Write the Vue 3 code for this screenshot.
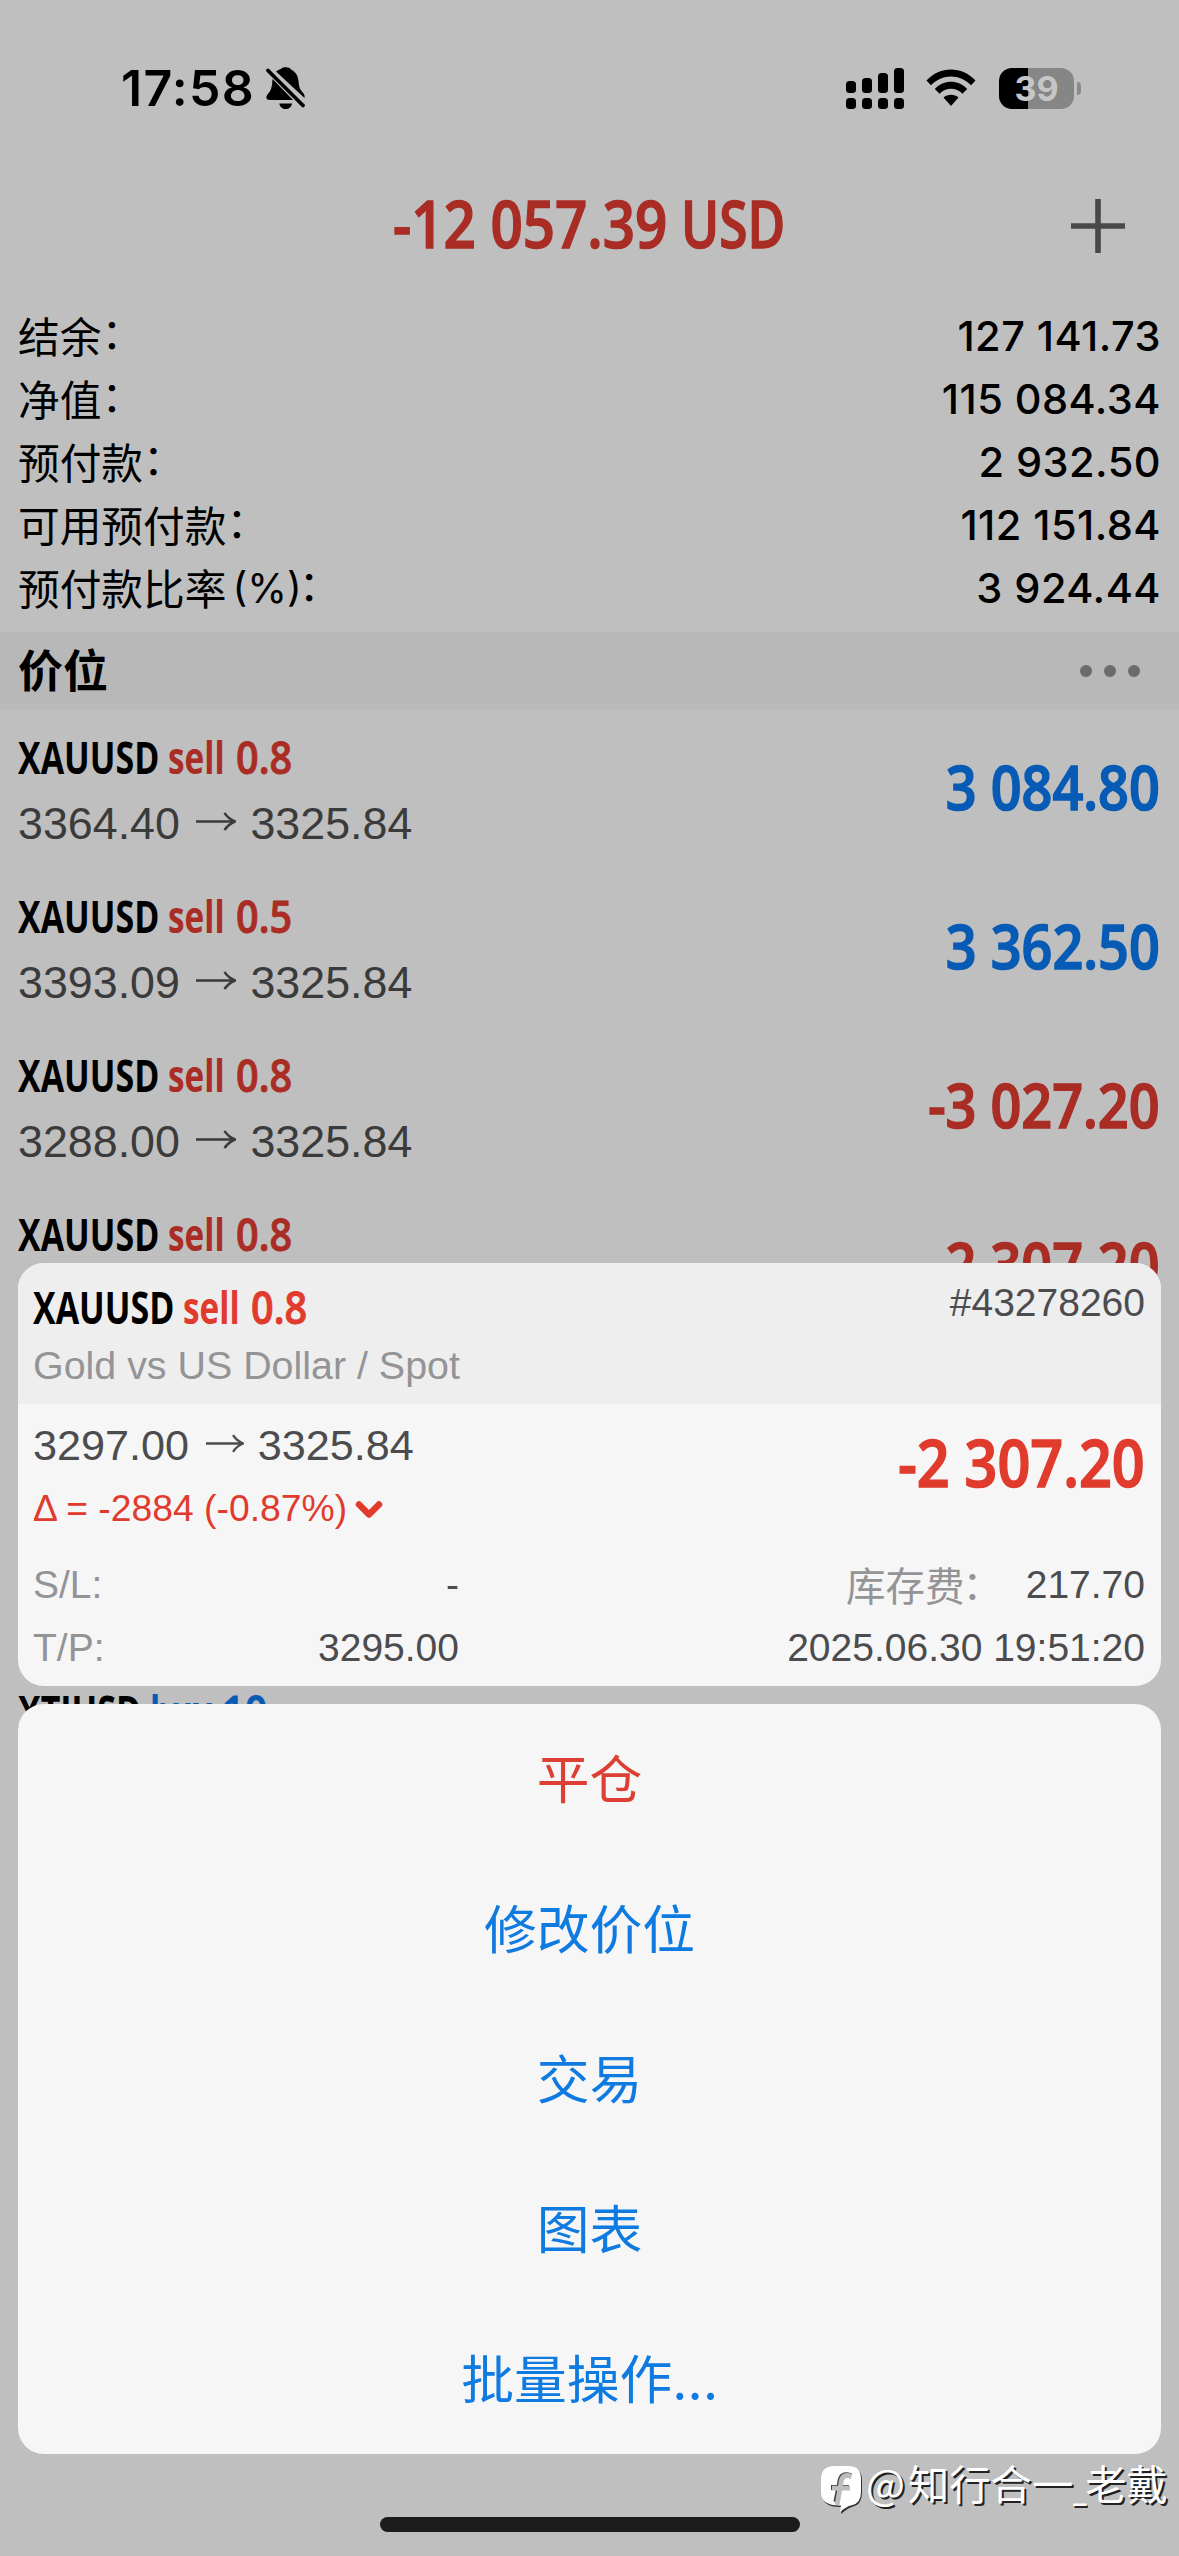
<script setup>
const summary = [
  { label: '结余', value: '127 141.73' },
  { label: '净值', value: '115 084.34' },
  { label: '预付款', value: '2 932.50' },
  { label: '可用预付款', value: '112 151.84' },
  { label: '预付款比率', unit: '(%)', value: '3 924.44' }
]

const positions = [
  { symbol: 'XAUUSD', side: 'sell', lots: '0.8', open: '3364.40', now: '3325.84', profit: '3 084.80' },
  { symbol: 'XAUUSD', side: 'sell', lots: '0.5', open: '3393.09', now: '3325.84', profit: '3 362.50' },
  { symbol: 'XAUUSD', side: 'sell', lots: '0.8', open: '3288.00', now: '3325.84', profit: '-3 027.20' },
  { symbol: 'XAUUSD', side: 'sell', lots: '0.8', profit: '-2 307.20' },
  { symbol: 'XTIUSD', side: 'buy', lots: '10', last: true }
]

const actions = [
  { text: '平仓', danger: true },
  { text: '修改价位' },
  { text: '交易' },
  { text: '图表' },
  { text: '批量操作', more: '...' }
]
</script>

<template>
  <main class="screen">
    <div class="status">
      <span class="clock">17:58</span>
      <svg class="bell" width="42" height="44" viewBox="0 0 42 44">
        <path d="M11 5.500 C13.500 3.800 15 3.500 16 3 C17 0.500 25 0.500 26 3.500 C31 6 33 10 33.500 15 C34 22 35.500 24 39 28 Q40 30 39.500 32 Z" />
        <path d="M7.500 13 L28 34 H5 C1 34 0.500 31 2.500 28.500 C6 24.500 7 22 7.500 13 Z" />
        <path d="M14.300 37.500 H27 C26.500 41 24 43 20.600 43 C17.500 43 14.800 41 14.300 37.500 Z" />
        <path d="M3 4.500 L38 39.500" fill="none" stroke="#000" stroke-width="3.800" stroke-linecap="round" />
      </svg>
      <svg class="signal" width="58" height="41" viewBox="0 0 58 41">
        <rect x="0" y="13" width="10" height="12" rx="3.500" />
        <rect x="16" y="10" width="10" height="15" rx="3.500" />
        <rect x="32" y="5" width="10" height="20" rx="3.500" />
        <rect x="48" y="0" width="10" height="25" rx="3.500" />
        <rect v-for="i in 4" :key="i" :x="(i - 1) * 16" y="30" width="10" height="11" rx="3.500" />
      </svg>
      <svg class="wifi" width="50" height="38" viewBox="0 0 50 38">
        <path d="M0.500 11.500 C14 -3.300 36 -3.300 49.500 11.500 L45 16.300 C34 4.500 16 4.500 5 16.300 Z" />
        <path d="M8.800 20 C18 10.300 32 10.300 41.200 20 L36.500 24.800 C30 18 20 18 13.500 24.800 Z" />
        <path d="M17.500 28.500 C21.500 24.800 28.500 24.800 32.500 28.500 L25 37 Z" />
      </svg>
      <div class="battery"><span>39</span></div>
      <i class="nub"></i>
    </div>

    <header class="top">
      <h1 class="cond"><span class="num">-12 057.39</span><span class="word">USD</span></h1>
      <svg class="plus" width="54" height="54" viewBox="0 0 54 54">
        <path d="M27 0 V54 M0 27 H54" stroke="#494949" stroke-width="5.600" />
      </svg>
    </header>

    <section class="summary">
      <div v-for="s in summary" :key="s.label" class="sum-row">
        <span class="sum-label">{{ s.label }}<span v-if="s.unit" class="unit">{{ s.unit }}</span><span class="colon">：</span></span>
        <span class="sum-value">{{ s.value }}</span>
      </div>
    </section>

    <div class="band">
      <h2>价位</h2>
      <div class="dots"><i></i><i></i><i></i></div>
    </div>

    <section class="list">
      <article v-for="(p, i) in positions" :key="i" class="pos" :class="{ last: p.last }">
        <div>
          <div class="name cond">
            <span class="sym">{{ p.symbol }}</span><span class="side" :class="p.side">{{ p.side }}</span><span class="lots" :class="p.side">{{ p.lots }}</span>
          </div>
          <div v-if="p.open" class="price">
            {{ p.open }}
            <svg width="40" height="19" viewBox="0 0 40 19"><path d="M0 9.500 H39 M28.500 0.800 Q32 6.500 39 9.500 Q32 12.500 28.500 18.200" /></svg>
            {{ p.now }}
          </div>
        </div>
        <span v-if="p.profit" class="profit cond" :class="p.profit[0] === '-' ? 'sell' : 'buy'">{{ p.profit }}</span>
      </article>
    </section>

    <section class="card">
      <div class="card-head">
        <div>
          <div class="name cond"><span class="sym">XAUUSD</span><span class="side">sell</span><span class="lots">0.8</span></div>
          <div class="desc">Gold vs US Dollar / Spot</div>
        </div>
        <span class="ticket">#43278260</span>
      </div>
      <div class="card-main">
        <div>
          <div class="price">
            3297.00
            <svg width="38" height="19" viewBox="0 0 40 19"><path d="M0 9.500 H39 M28.500 0.800 Q32 6.500 39 9.500 Q32 12.500 28.500 18.200" /></svg>
            3325.84
          </div>
          <div class="delta">
            <span>Δ = -2884 (-0.87%)</span>
            <svg width="28" height="20" viewBox="0 0 28 20"><path d="M4 4.500 L14 14.500 L24 4.500" /></svg>
          </div>
        </div>
        <span class="profit cond">-2 307.20</span>
      </div>
      <div class="details">
        <span class="key">S/L:</span><span class="val">-</span>
        <span class="swap key"><span>库存费</span><span class="colon">：</span></span><span class="val">217.70</span>
      </div>
      <div class="details">
        <span class="key">T/P:</span><span class="val">3295.00</span>
        <span class="date">2025.06.30 19:51:20</span>
      </div>
    </section>

    <nav class="menu">
      <button v-for="a in actions" :key="a.text" :class="{ danger: a.danger }">{{ a.text }}<span v-if="a.more" class="more">{{ a.more }}</span></button>
    </nav>

    <div class="home"></div>

    <div class="mark">
      <svg width="46" height="50" viewBox="0 0 46 50">
        <path d="M15 2 H29 Q41 2 41 14 V27 Q41 39 31 41 Q27 42 20 48 L21 41 Q1 42 1 27 V14 Q1 2 15 2 Z" fill="#333" transform="translate(1 1)" />
        <path d="M15 1 H28 Q41 1 41 14 V27 Q41 39 31 40.500 Q27 41 20 47 L21 40.500 Q1 41 1 27 V14 Q1 1 15 1 Z" fill="#fff" />
        <path d="M31 11 Q21 7 20 17 L16 37 M11 22.500 H29" fill="none" stroke="#444" stroke-width="5.200" />
        <path d="M31.500 11.500 Q22 7.500 21 18 L17 40 M12 23.200 H30" fill="none" stroke="#bdbdbd" stroke-width="4.800" />
      </svg>
      <span class="at">@</span><span>知行合一</span><span class="under">_</span><span>老戴</span>
    </div>
  </main>
</template>

<style>
body { margin: 0; background: #bfbfbf; }
</style>

<style scoped>
* { box-sizing: border-box; }
.screen {
  position: relative;
  width: 1179px;
  height: 2556px;
  overflow: hidden;
  background: #bfbfbf;
  color: #000;
  font-family: "Liberation Sans", "Noto Sans CJK SC", sans-serif;
}
h1, h2 { margin: 0; }
svg { display: block; flex: none; }
.cond { font-family: "Open Sans", sans-serif; font-weight: 700; white-space: nowrap; }

.status { display: flex; align-items: center; height: 176px; padding-left: 121px; }
.clock { width: 144px; font: 600 50px/60px Inter, sans-serif; letter-spacing: 1.300px; }
.signal { margin-left: 539px; }
.wifi { margin-left: 22px; }
.battery {
  display: flex; align-items: center; justify-content: center;
  width: 75px; height: 41px; margin-left: 23px; border-radius: 13px;
  background: linear-gradient(90deg, #000 29px, #868686 29px);
  color: #c6c6c6; font: 700 34px/41px Inter, sans-serif;
}
.nub { width: 4px; height: 13px; margin-left: 3px; border-radius: 0 4px 4px 0; background: #8a8a8a; }

.top { display: flex; align-items: center; height: 92px; padding-left: 393px; }
.top h1 { display: flex; width: 678px; font-size: 65.500px; line-height: 95px; color: #a92d25; -webkit-text-stroke: 1.500px currentColor; }
.num { width: 288px; font-weight: 600; transform: scaleX(.862); transform-origin: left; }
.word { transform: scaleX(.785); transform-origin: left; font-weight: 600; }
.plus { margin-top: 8px; }

.summary { padding: 36px 18px 0 18px; height: 364px; }
.sum-row { display: flex; justify-content: space-between; height: 63px; line-height: 63px; }
.sum-label { display: flex; font-family: "Noto Sans CJK SC", sans-serif; font-size: 41.700px; }
.unit { margin: 0 -3px 0 6px; font: 400 40.500px/65px Inter, sans-serif; }
.colon { transform: translateY(-4px); }
.sum-value { font: 500 41.500px/65px Inter, sans-serif; letter-spacing: .450px; }

.band {
  display: flex; justify-content: space-between; align-items: center;
  height: 78px; padding: 0 39px 0 18px; border-bottom: 6px solid #bbb; background: #b8b8b8;
}
.band h2 { font: 700 45px/74px "Noto Sans CJK SC", sans-serif; padding-top: 1px; }
.dots { display: flex; gap: 12px; margin-top: 6px; }
.dots i { width: 12px; height: 12px; border-radius: 50%; background: #6b6b6b; }

.pos { display: flex; justify-content: space-between; height: 159px; padding: 17px 19px 0 18px; }
.pos.last { margin-top: 318px; }
.name { display: flex; font-size: 45px; line-height: 60px; }
.name span { transform-origin: left; }
.sym { width: 150px; transform: scaleX(.755); }
.side { width: 68px; transform: scaleX(.74); }
.lots { transform: scaleX(.88); font-weight: 600; -webkit-text-stroke: .900px currentColor; }
.sell { color: #a92d25; }
.buy { color: #075bb5; }
.last .sym { width: 132px; }
.last .side { width: 72px; }
.price { display: flex; align-items: center; margin-top: 8px; font-size: 44.800px; line-height: 56px; color: #3b3b3b; }
.price svg { margin: -4px 14px 0 16.500px; fill: none; stroke: currentColor; stroke-width: 2.500; }
.profit { margin-top: 19px; font-size: 61.500px; font-weight: 600; line-height: 80px; transform: scaleX(.878); transform-origin: right; -webkit-text-stroke: 1.600px currentColor; }

.card, .menu { position: absolute; left: 18px; width: 1143px; border-radius: 26px; background: #f6f6f7; overflow: hidden; }
.card { top: 1263px; height: 423px; color: #4c4c4e; }
.card-head { display: flex; justify-content: space-between; height: 141px; padding: 14px 16px 0 15px; background: #eee; }
.card .sym { color: #000; }
.card .side, .card .lots, .card .profit, .delta { color: #e03b2d; }
.desc { margin-top: 2px; font-size: 39.400px; line-height: 52px; color: #949496; white-space: nowrap; }
.ticket { margin-top: -1px; font-size: 39px; line-height: 54px; }
.card-main { display: flex; justify-content: space-between; height: 148px; padding: 9px 16px 0 15px; }
.card .price { margin: 4px 0 0; font-size: 43.200px; color: #4c4c4e; }
.card .profit { margin-top: 9px; font-size: 65.500px; }
.delta { display: flex; align-items: center; margin-top: 9px; font-size: 37.300px; line-height: 52px; }
.delta svg { margin: 3px 0 0 8px; fill: none; stroke: currentColor; stroke-width: 6.500; stroke-linecap: round; stroke-linejoin: round; }
.details { display: flex; height: 63px; padding: 0 16px 0 15px; font-size: 39px; line-height: 65px; white-space: nowrap; }
.key { color: #949496; }
.details > .key:first-child { width: 120px; }
.details > .val:nth-child(2) { width: 306px; text-align: right; }
.details .val:last-child, .date { margin-left: auto; }
.swap { display: flex; width: 160px; margin-left: 387px; font: 400 39.500px/63px "Noto Sans CJK SC", sans-serif; }
.swap .colon { transform: translate(-2px, -2px); }

.menu { top: 1704px; height: 750px; display: flex; flex-direction: column; }
.menu button {
  display: flex; justify-content: center; height: 150px; padding: 0; border: 0; background: none;
  color: #0f7ae0; font: 400 52.800px/145px "Noto Sans CJK SC", sans-serif;
}
.menu .danger { color: #dc4034; }
.more { margin-right: -1px; letter-spacing: .800px; }

.home { position: absolute; left: 380px; top: 2517px; width: 420px; height: 15px; border-radius: 8px; background: #1c1c1c; }
.mark {
  position: absolute; left: 820px; top: 2452px; display: flex; align-items: center; height: 60px;
  color: #fff; font: 400 41.300px/60px "Noto Sans CJK SC", sans-serif; text-shadow: 2px 2px 0 #222;
}
.mark svg { margin-top: 16px; }
.at { width: 42px; }
.under { width: 12px; transform: scaleX(.6); transform-origin: left; }
</style>
